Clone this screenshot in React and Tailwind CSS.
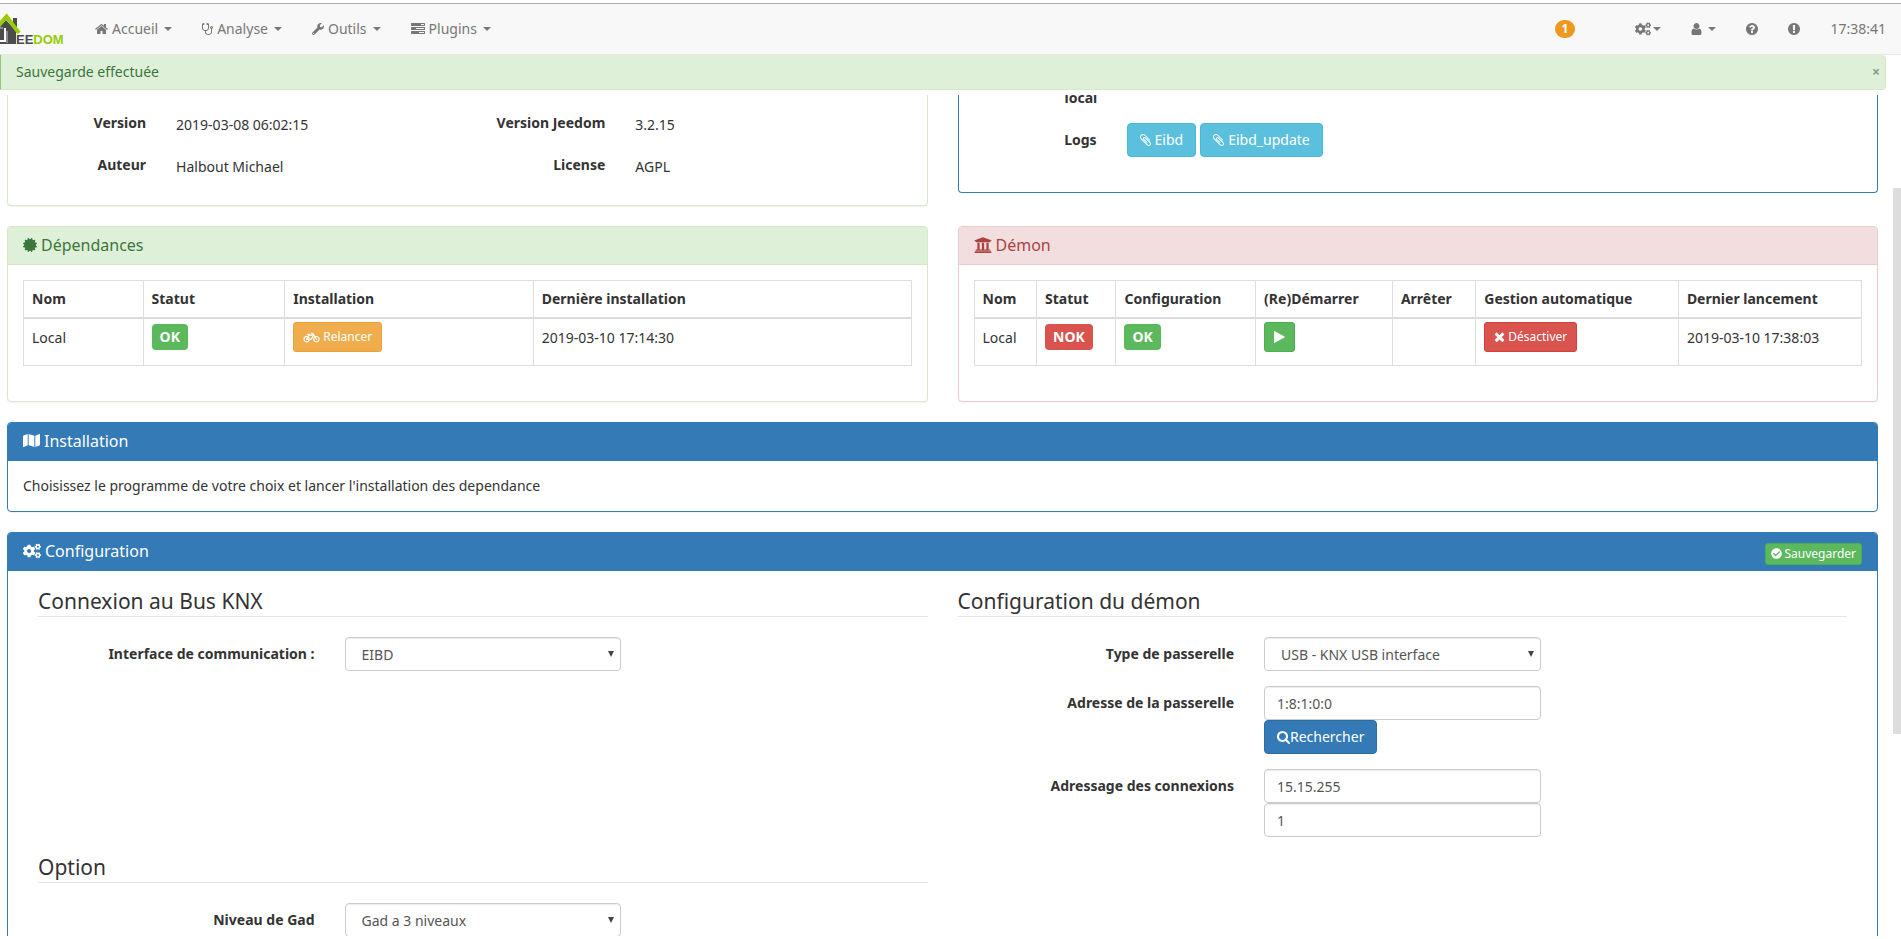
import React from "react";
import { FaBicycle, FaCertificate, FaCheckCircle, FaCogs, FaMap, FaUniversity, FaWrench } from "react-icons/fa";

const PATHS = {
  home: "M1472 992v480q0 26-19 45t-45 19h-384v-384h-256v384h-384q-26 0-45-19t-19-45v-480q0-1 .5-3t.5-3l575-474 575 474q1 2 1 6zm223-69l-62 74q-8 9-21 11h-3q-13 0-21-7l-692-577-692 577q-12 8-24 7-13-2-21-11l-62-74q-8-10-7-23.5t11-21.5l719-599q32-26 76-26t76 26l244 204v-195q0-14 9-23t23-9h192q14 0 23 9t9 23v408l219 182q10 8 11 21.5t-7 23.5z",
  stethoscope:
    "M1472 704q0-26-19-45t-45-19-45 19-19 45 19 45 45 19 45-19 19-45zm128 0q0 62-35.5 111t-92.5 70v395q0 159-131.5 271.5t-316.5 112.5-316.5-112.5-131.5-271.5v-132q-164-20-274-128t-110-252v-512q0-26 19-45t45-19q6 0 16 2 17-30 47-48t65-18q53 0 90.5 37.5t37.5 90.5-37.5 90.5-90.5 37.5q-33 0-64-18v402q0 106 94 181t226 75 226-75 94-181v-402q-31 18-64 18-53 0-90.5-37.5t-37.5-90.5 37.5-90.5 90.5-37.5q35 0 65 18t47 48q10-2 16-2 26 0 45 19t19 45v512q0 144-110 252t-274 128v132q0 106 94 181t226 75 226-75 94-181v-395q-57-21-92.5-70t-35.5-111q0-80 56-136t136-56 136 56 56 136z",
  tasks:
    "M1024 1408h640v-128h-640v128zm-384-512h1024v-128h-1024v128zm640-512h384v-128h-384v128zm512 832v256q0 26-19 45t-45 19h-1664q-26 0-45-19t-19-45v-256q0-26 19-45t45-19h1664q26 0 45 19t19 45zm0-512v256q0 26-19 45t-45 19h-1664q-26 0-45-19t-19-45v-256q0-26 19-45t45-19h1664q26 0 45 19t19 45zm0-512v256q0 26-19 45t-45 19h-1664q-26 0-45-19t-19-45v-256q0-26 19-45t45-19h1664q26 0 45 19t19 45z",
  user: "M1536 1399q0 109-62.5 187t-150.5 78h-854q-88 0-150.5-78t-62.5-187q0-85 8.5-160.5t31.5-152 58.5-131 94-89 134.5-34.5q131 128 313 128t313-128q76 0 134.5 34.5t94 89 58.5 131 31.5 152 8.5 160.5zm-256-887q0 159-112.5 271.5t-271.5 112.5-271.5-112.5-112.5-271.5 112.5-271.5 271.5-112.5 271.5 112.5 112.5 271.5z",
  question:
    "M1024 1376v-192q0-14-9-23t-23-9h-192q-14 0-23 9t-9 23v192q0 14 9 23t23 9h192q14 0 23-9t9-23zm256-672q0-88-55.5-163t-138.5-116-170-41q-243 0-371 213-15 24 8 42l132 100q7 6 19 6 16 0 25-12 53-68 86-92 34-24 86-24 48 0 85.5 26t37.5 59q0 38-20 61t-68 45q-63 28-115.5 86.5t-52.5 125.5v36q0 14 9 23t23 9h192q14 0 23-9t9-23q0-19 21.5-49.5t54.5-49.5q32-18 49-28.5t46-35 44.5-48 28-60.5 12.5-81zm384 192q0 209-103 385.5t-279.5 279.5-385.5 103-385.5-103-279.5-279.5-103-385.5 103-385.5 279.5-279.5 385.5-103 385.5 103 279.5 279.5 103 385.5z",
  exclamation:
    "M896 128q209 0 385.5 103t279.5 279.5 103 385.5-103 385.5-279.5 279.5-385.5 103-385.5-103-279.5-279.5-103-385.5 103-385.5 279.5-279.5 385.5-103zm128 1247v-190q0-14-9-23.5t-22-9.5h-192q-13 0-23 10t-10 23v190q0 13 10 23t23 10h192q13 0 22-9.5t9-23.5zm-2-344l18-621q0-12-10-18-10-8-24-8h-220q-14 0-24 8-10 6-10 18l17 621q0 10 10 17.5t24 7.5h185q14 0 23.5-7.5t10.5-17.5z",
  paperclip:
    "M1596 1385q0 117-79 196t-196 79q-135 0-235-100l-777-776q-113-115-113-271 0-159 110-270t269-111q158 0 273 113l605 606q10 10 10 22 0 16-30.500 46.500t-46.500 30.500q-13 0-23-10l-606-607q-79-77-181-77-106 0-179 75t-73 181q0 105 76 181l776 777q63 63 145 63 64 0 106-42t42-106q0-82-63-145l-581-581q-26-24-60-24-29 0-48 19t-19 48q0 32 25 59l410 410q10 10 10 22 0 16-31 47t-47 31q-12 0-22-10l-410-410q-63-61-63-149 0-82 57-139t139-57q88 0 149 63l581 581q100 98 100 235z",
  times:
    "M1490 1322q0 40-28 68l-136 136q-28 28-68 28t-68-28l-294-294-294 294q-28 28-68 28t-68-28l-136-136q-28-28-28-68t28-68l294-294-294-294q-28-28-28-68t28-68l136-136q28-28 68-28t68 28l294 294 294-294q28-28 68-28t68 28l136 136q28 28 28 68t-28 68l-294 294 294 294q28 28 28 68z",
  play: "M1576 927l-1328 738q-23 13-39.5 3t-16.5-36v-1472q0-26 16.5-36t39.5 3l1328 738q23 13 23 31t-23 31z",
  search:
    "M1216 832q0-185-131.5-316.5t-316.5-131.5-316.5 131.5-131.5 316.5 131.5 316.5 316.5 131.5 316.5-131.5 131.5-316.5zm512 832q0 52-38 90t-90 38q-54 0-90-38l-343-342q-179 124-399 124-143 0-273.5-55.5t-225-150-150-225-55.5-273.5 55.5-273.5 150-225 225-150 273.5-55.5 273.5 55.5 225 150 150 225 55.5 273.5q0 220-124 399l343 343q37 37 37 90z",
};

// Cadrages plus étroits pour les glyphes qui n'occupent pas toute la grille
const WIDE = "64 0 1664 1792";
const NARROW = "192 0 1408 1792";

const Icon = ({ name, className = "size-[14px]", viewBox = "0 0 1792 1792" }) => (
  <svg viewBox={viewBox} fill="currentColor" aria-hidden="true" className={className}>
    <path d={PATHS[name]} />
  </svg>
);

const Caret = () => (
  <span className="ml-[2px] border-x-4 border-t-4 border-x-transparent border-t-current" />
);

const Logo = () => (
  <svg viewBox="0 0 66 31" className="h-[31px] w-[66px] overflow-visible" role="img" aria-label="Jeedom">
    <path d="M13 4h4v12h-4z" fill="#4a4a4f" />
    <path d="M-4 17L6 6l10 11v13h-16z" fill="#4a4a4f" />
    <path d="M-1 27h6V14" fill="none" stroke="#f8f8f8" strokeWidth="2" />
    <path d="M7 17v12M-1 14h4" fill="none" stroke="#c9c9cb" strokeWidth="1" />
    <path d="M-6 17L6.500 2.500L19 19" fill="none" stroke="#96cc00" strokeWidth="4" />
    <text x="16" y="30" fontSize="13" fontWeight="700" fontFamily="'Liberation Sans', sans-serif" fill="#4a4a4f">
      EE<tspan fill="#96cc00">DOM</tspan>
    </text>
  </svg>
);

const NavItem = ({ icon, children }) => (
  <a href="#" className="flex items-center gap-1 px-[15px] py-[15px]">
    {icon}
    {children}
  </a>
);

const Navbar = () => (
  <header className="mt-[3px] flex shrink-0 items-center justify-between border-y border-t-[#ababab] border-b-[#e7e7e7] bg-[#f8f8f8] text-[#777]">
    <nav className="flex items-center">
      <a href="#" className="w-20">
        <Logo />
      </a>
      <NavItem icon={<Icon name="home" viewBox={WIDE} className="h-[14px] w-[13px]" />}>
        Accueil <Caret />
      </NavItem>
      <NavItem icon={<Icon name="stethoscope" viewBox={NARROW} className="h-[14px] w-[11px]" />}>
        Analyse <Caret />
      </NavItem>
      <NavItem icon={<FaWrench className="size-[12px]" />}>
        Outils <Caret />
      </NavItem>
      <NavItem icon={<Icon name="tasks" />}>
        Plugins <Caret />
      </NavItem>
    </nav>
    <nav className="flex items-center">
      <a href="#" className="mr-[45px] rounded-full bg-[#ed991f] px-[7px] text-xs leading-[18px] font-bold text-white">
        1
      </a>
      <a href="#" aria-label="Réglages" className="flex items-center px-[15px] py-[18px]">
        <FaCogs className="h-[14px] w-[16px]" />
        <Caret />
      </a>
      <a href="#" aria-label="Utilisateur" className="flex items-center gap-1 px-[15px] py-[18px]">
        <Icon name="user" viewBox={NARROW} className="h-[14px] w-[11px]" />
        <Caret />
      </a>
      <a href="#" aria-label="Aide" className="px-[14px]">
        <Icon name="question" />
      </a>
      <a href="#" aria-label="Rapport" className="px-[14px]">
        <Icon name="exclamation" />
      </a>
      <span className="px-[15px]">17:38:41</span>
    </nav>
  </header>
);

const PANEL = {
  success: "border-[#d6e9c6]",
  danger: "border-[#ebccd1]",
  primary: "border-[#337ab7]",
};

const HEADING = {
  success: "border-[#d6e9c6] bg-[#dff0d8] text-[#3c763d]",
  danger: "border-[#ebccd1] bg-[#f2dede] text-[#a94442]",
  primary: "border-[#337ab7] bg-[#337ab7] text-white",
};

const Panel = ({ type, icon, title, action, children }) => (
  <section className={`rounded border bg-white shadow-[0_1px_1px_rgba(0,0,0,0.05)] ${PANEL[type]}`}>
    <div className={`flex h-[38px] items-start justify-between rounded-t-[3px] border-b px-[15px] pt-[9px] ${HEADING[type]}`}>
      <h3 className="flex items-center gap-1 text-base leading-[18px]">
        {icon}
        {title}
      </h3>
      {action}
    </div>
    <div className="p-[15px]">{children}</div>
  </section>
);

const InfoRow = ({ items }) => (
  <dl className="mb-[13px] grid grid-cols-12">
    {items.map(([label, value]) => (
      <React.Fragment key={label}>
        <dt className="col-span-2 px-[15px] pt-[7px] text-right font-bold">{label}</dt>
        <dd className="col-span-4 px-[15px] pt-[9px]">{value}</dd>
      </React.Fragment>
    ))}
  </dl>
);

const Table = ({ head, children }) => (
  <table className="mb-5 w-full border-collapse border border-[#ddd]">
    <thead>
      <tr>
        {head.map((h) => (
          <th key={h} className="border border-b-2 border-[#ddd] p-2 text-left font-bold">
            {h}
          </th>
        ))}
      </tr>
    </thead>
    <tbody>
      <tr className="h-[47px] align-top">{children}</tr>
    </tbody>
  </table>
);

const Td = ({ children }) => <td className="border border-[#ddd] px-2 pt-[9px]">{children}</td>;

const TdControl = ({ children }) => <td className="border border-[#ddd] px-2 pt-[3px]">{children}</td>;

const TdLabel = ({ color, children }) => (
  <td className="border border-[#ddd] px-2 pt-[5px]">
    <span className={`inline-block rounded px-2 leading-[26px] font-bold text-white ${color}`}>{children}</span>
  </td>
);

const SmallButton = ({ color, children }) => (
  <button className={`flex items-center gap-[3px] rounded-[3px] border px-[9px] py-[5px] text-xs leading-[18px] text-white ${color}`}>
    {children}
  </button>
);

const LogButton = ({ children }) => (
  <button className="flex items-center gap-1 rounded border border-[#46b8da] bg-[#5bc0de] px-3 py-[6px] text-white">
    <Icon name="paperclip" viewBox={NARROW} className="h-[14px] w-[11px]" />
    {children}
  </button>
);

const Legend = ({ children }) => (
  <h4 className="mb-5 border-b border-[#e5e5e5] text-[21px] leading-[30px]">{children}</h4>
);

const FormGroup = ({ id, label, children }) => (
  <div className="-mx-[15px] mb-[15px] grid grid-cols-3">
    <label htmlFor={id} className="px-[15px] pt-[7px] text-right font-bold">
      {label}
    </label>
    <div className="px-[15px]">{children}</div>
  </div>
);

const Select = ({ id, value }) => (
  <div className="relative">
    <select
      id={id}
      className="block h-[34px] w-full appearance-none rounded border border-[#ccc] bg-white px-4 pt-[2px] text-[#555] shadow-[inset_0_1px_1px_rgba(0,0,0,0.075)]"
    >
      <option>{value}</option>
    </select>
    <svg viewBox="0 0 6 6" fill="#444" aria-hidden="true" className="pointer-events-none absolute top-[14px] right-[7px] size-[6px]">
      <path d="M0 0h6L3 6z" />
    </svg>
  </div>
);

const Input = ({ id, value, label }) => (
  <input
    id={id}
    aria-label={label}
    defaultValue={value}
    className="block h-[34px] w-full rounded border border-[#ccc] bg-white px-3 pt-[2px] text-[#555] shadow-[inset_0_1px_1px_rgba(0,0,0,0.075)]"
  />
);

const App = () => {
  return (
    <div className="relative flex h-screen flex-col overflow-hidden bg-white pb-[3px] font-['Noto_Sans',sans-serif] text-sm leading-5 text-[#333]">
      <Navbar />

      <div
        role="alert"
        className="mr-[15px] mb-[5px] flex shrink-0 items-center justify-between rounded-r border border-t-0 border-[#d6e9c6] border-l-[#8cc97f] bg-[#dff0d8] py-[7px] pr-[5px] pl-[15px] text-[#3c763d]"
      >
        Sauvegarde effectuée
        <button aria-label="Fermer" className="font-bold text-[#8f9a8c]">
          ×
        </button>
      </div>

      <main className="min-h-0 flex-1 overflow-hidden pr-[23px] pl-[7px]">
        <div className="-mt-2 grid grid-cols-2 items-start gap-x-[30px]">
          <section className="mb-5 rounded-b border border-t-0 border-[#d6e9c6] pt-[19px] pb-[15px] shadow-[0_1px_1px_rgba(0,0,0,0.05)]">
            <InfoRow
              items={[
                ["Version", "2019-03-08 06:02:15"],
                ["Version Jeedom", "3.2.15"],
              ]}
            />
            <InfoRow
              items={[
                ["Auteur", "Halbout Michael"],
                ["License", "AGPL"],
              ]}
            />
          </section>
          <section className="rounded-b border border-t-0 border-[#337ab7] pb-[35px]">
            <div className="grid grid-cols-6 pt-px pb-[15px]">
              <div className="px-[15px] text-right font-bold">
                <span className="inline-block w-8 text-left">local</span>
              </div>
            </div>
            <div className="grid grid-cols-6">
              <div className="px-[15px] pt-[7px] text-right font-bold">Logs</div>
              <div className="col-span-5 flex gap-1 px-[15px]">
                <LogButton>Eibd</LogButton>
                <LogButton>Eibd_update</LogButton>
              </div>
            </div>
          </section>
        </div>

        <div className="mb-5 grid grid-cols-2 gap-[30px]">
          <Panel type="success" icon={<FaCertificate className="size-[14px]" />} title="Dépendances">
            <Table head={["Nom", "Statut", "Installation", "Dernière installation"]}>
              <Td>Local</Td>
              <TdLabel color="bg-[#5cb85c]">OK</TdLabel>
              <TdControl>
                <SmallButton color="border-[#eea236] bg-[#f0ad4e]">
                  <FaBicycle className="h-[13px] w-[17px]" />
                  Relancer
                </SmallButton>
              </TdControl>
              <Td>2019-03-10 17:14:30</Td>
            </Table>
          </Panel>

          <Panel type="danger" icon={<FaUniversity className="size-[18px]" />} title="Démon">
            <Table
              head={["Nom", "Statut", "Configuration", "(Re)Démarrer", "Arrêter", "Gestion automatique", "Dernier lancement"]}
            >
              <Td>Local</Td>
              <TdLabel color="bg-[#d9534f]">NOK</TdLabel>
              <TdLabel color="bg-[#5cb85c]">OK</TdLabel>
              <TdControl>
                <SmallButton color="border-[#4cae4c] bg-[#5cb85c]">
                  <Icon name="play" viewBox="192 120 1408 1552" className="my-[3px] h-3 w-[11px]" />
                </SmallButton>
              </TdControl>
              <Td />
              <TdControl>
                <SmallButton color="border-[#d43f3a] bg-[#d9534f]">
                  <Icon name="times" viewBox="192 288 1408 1408" className="size-[11px]" />
                  Désactiver
                </SmallButton>
              </TdControl>
              <Td>2019-03-10 17:38:03</Td>
            </Table>
          </Panel>
        </div>

        <div className="mb-5">
          <Panel type="primary" icon={<FaMap className="size-[17px]" />} title="Installation">
            Choisissez le programme de votre choix et lancer l'installation des dependance
          </Panel>
        </div>

        <Panel
          type="primary"
          icon={<FaCogs className="size-[18px]" />}
          title="Configuration"
          action={
            <button className="mt-px flex items-center gap-[2px] rounded-[3px] border border-[#4cae4c] bg-[#5cb85c] px-[5px] py-px text-xs leading-[18px] text-white">
              <FaCheckCircle className="size-[11px]" />
              Sauvegarder
            </button>
          }
        >
          <div className="grid grid-cols-2">
            <div className="px-[15px]">
              <Legend>Connexion au Bus KNX</Legend>
              <FormGroup id="interface" label="Interface de communication :">
                <Select id="interface" value="EIBD" />
              </FormGroup>
            </div>
            <div className="px-[15px]">
              <Legend>Configuration du démon</Legend>
              <FormGroup id="type" label="Type de passerelle">
                <Select id="type" value="USB - KNX USB interface" />
              </FormGroup>
              <FormGroup id="adresse" label="Adresse de la passerelle">
                <Input id="adresse" value="1:8:1:0:0" />
                <button className="flex items-center rounded border border-[#2e6da4] bg-[#337ab7] px-3 py-[6px] text-white">
                  <Icon name="search" viewBox={WIDE} className="h-[14px] w-[13px]" />
                  Rechercher
                </button>
              </FormGroup>
              <FormGroup id="connexions" label="Adressage des connexions">
                <Input id="connexions" value="15.15.255" />
                <Input label="Nombre de connexions" value="1" />
              </FormGroup>
            </div>
            <div className="px-[15px]">
              <Legend>Option</Legend>
              <FormGroup id="gad" label="Niveau de Gad">
                <Select id="gad" value="Gad a 3 niveaux" />
              </FormGroup>
            </div>
          </div>
        </Panel>
      </main>

      {/* Curseur de la barre de défilement */}
      <div className="absolute top-[188px] right-0 h-[546px] w-2 bg-[#ddd]" />
    </div>
  );
};

export default App;
